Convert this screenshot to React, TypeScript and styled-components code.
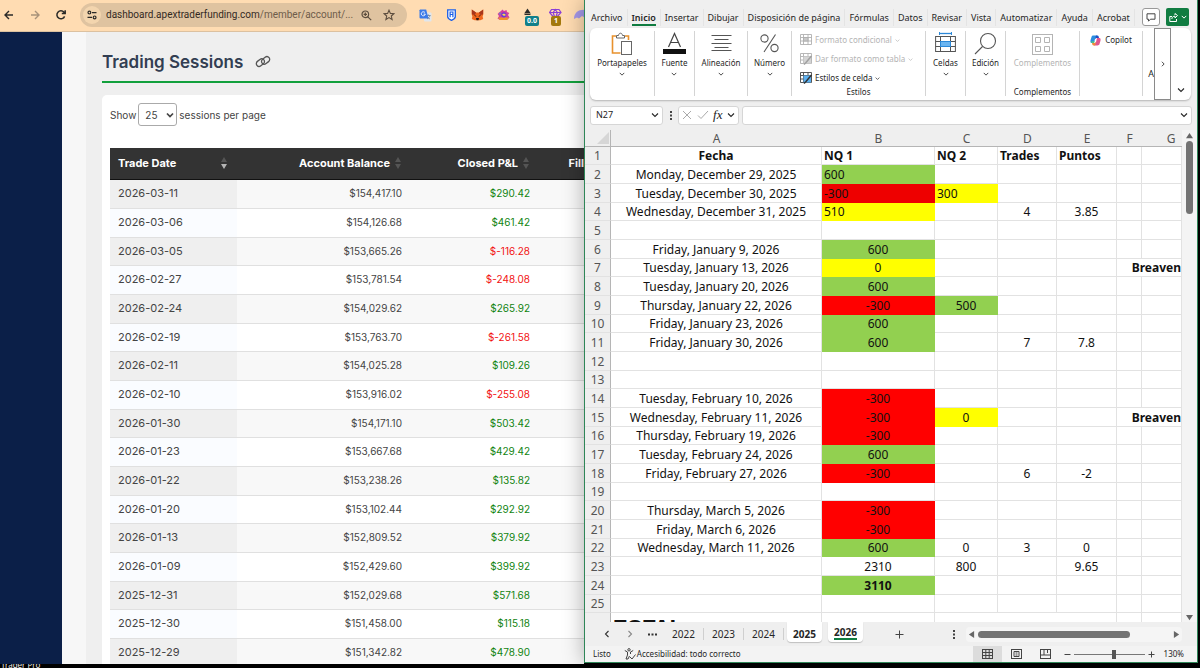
import React from "react";
import styled, { createGlobalStyle, css } from "styled-components";

const WEB_FONT = `"Inter", "Open Sans", sans-serif`;
const UI_FONT = `"Noto Sans", "Open Sans", sans-serif`;

const GlobalStyle = createGlobalStyle`
  *, *::before, *::after { box-sizing: border-box; }
  body { margin: 0; background: #000; overflow: hidden; }
  button, input, select { font: inherit; color: inherit; margin: 0; }
  button { padding: 0; border: 0; background: none; cursor: pointer; }
  a { color: inherit; text-decoration: none; }
  svg { display: block; flex: none; }
`;

const Desktop = styled.div`
  display: grid;
  grid-template-columns: 584fr 616fr;
  grid-template-rows: minmax(0, 1fr) 4px;
  height: 100vh;
  background: #000;
`;

const DesktopLabel = styled.div`
  grid-column: 1 / -1;
  padding-left: 1px;
  overflow: hidden;
  font: 8px/2px ${UI_FONT};
  color: #eee;
`;

/* ---------- Browser ---------- */

const Browser = styled.section`
  display: flex;
  flex-direction: column;
  min-width: 0;
  min-height: 0;
  overflow: hidden;
  background: #efefef;
`;

const BrowserBar = styled.header`
  display: flex;
  align-items: center;
  flex: none;
  height: 32px;
  padding-bottom: 1px;
  background: #ffdcb2;
  border-bottom: 1px solid #dcc1a0;
  overflow: hidden;
`;

const NavButton = styled.button<{ $dim?: boolean }>`
  display: grid;
  place-items: center;
  flex: none;
  width: 26px;
  height: 24px;
  color: ${(p) => (p.$dim ? "#a8927a" : "#2b2a28")};
`;

const NavGroup = styled.nav`
  display: flex;
  flex: none;
  width: 84px;
  margin-left: -4px;
`;

const AddressBar = styled.div`
  display: flex;
  align-items: center;
  flex: 0 0 56%;
  min-width: 0;
  height: 24px;
  padding: 0 10px 0 3px;
  border-radius: 12px;
  background: #dfc3a0;
  color: #5c4d3e;
`;

const SiteInfo = styled.button`
  display: grid;
  place-items: center;
  flex: none;
  width: 18px;
  height: 18px;
  border-radius: 9px;
  background: #f3d5ae;
  color: #2b2a28;
`;

const UrlLink = styled.a`
  flex: 1;
  min-width: 0;
  margin-left: 5px;
  white-space: nowrap;
  font: 10px/16px "Roboto", ${UI_FONT};
  color: #6e5c4a;
  b { font-weight: 400; color: #33291f; }
`;

const AddressAction = styled.button`
  display: grid;
  place-items: center;
  flex: none;
  width: 16px;
  height: 16px;
  margin-left: 7px;
`;

const Extensions = styled.div`
  display: flex;
  gap: 8px;
  flex: none;
  padding-left: 9px;
`;

const Extension = styled.button`
  position: relative;
  display: grid;
  place-items: center;
  flex: none;
  width: 18px;
  height: 24px;
`;

const ExtensionBadge = styled.span<{ $color: string }>`
  position: absolute;
  top: 13px;
  left: 5px;
  min-width: 10px;
  padding: 0 2px;
  border-radius: 2px;
  background: ${(p) => p.$color};
  color: #fff;
  font: 700 7px/10px ${UI_FONT};
`;

const Page = styled.div`
  display: flex;
  flex: 1;
  min-height: 0;
`;

const SideNav = styled.aside`
  flex: none;
  width: 62px;
  background: #0b1f48;
`;

const Gutter = styled.div`
  flex: none;
  width: 24px;
  background: #f7f7f7;
`;

const Main = styled.main`
  flex: 1;
  min-width: 0;
  padding-left: 16px;
  overflow: hidden;
  font: 10px/16px ${WEB_FONT};
  color: #444;
`;

const TitleBar = styled.div`
  display: flex;
  align-items: center;
  gap: 12px;
  height: 51px;
  padding-top: 10px;
  border-bottom: 2px solid #12a03c;
  color: #555;
`;

const Title = styled.h1`
  margin: 0;
  font: 600 17px/24px ${WEB_FONT};
  color: #323e52;
`;

const Card = styled.section`
  margin-top: 12px;
  padding: 8px 0 0 8px;
  border-radius: 5px 0 0 0;
  background: #fff;
`;

const PageSize = styled.label`
  display: flex;
  align-items: center;
  gap: 2px;
  height: 23px;
  margin-bottom: 22px;
`;

const SelectBox = styled.span`
  display: grid;
  align-items: center;
  width: 39px;
  height: 23px;
  & > * { grid-area: 1 / 1; }
  svg { justify-self: end; margin-right: 3px; pointer-events: none; }
`;

const SizeSelect = styled.select`
  appearance: none;
  width: 100%;
  height: 23px;
  padding: 0 6px;
  border: 1px solid #aaa;
  border-radius: 3px;
  background: #fff;
`;

const Sessions = styled.table`
  width: 100%;
  table-layout: fixed;
  border-collapse: separate;
  border-spacing: 0;
`;

const SessionHead = styled.th<{ $last?: boolean }>`
  height: 32px;
  padding: ${(p) => (p.$last ? "0 0 2px" : "0 10px 2px 8px")};
  background: #333;
  border-bottom: 1px solid #111;
  color: #fff;
  font-size: 11px;
  font-weight: 700;
  text-align: right;
  white-space: nowrap;
`;

const HeadInner = styled.span<{ $spread?: boolean }>`
  display: flex;
  align-items: center;
  justify-content: ${(p) => (p.$spread ? "space-between" : "flex-end")};
  gap: 5px;
`;

const SessionRow = styled.tr`
  td { height: 29px; background: #fff; border-bottom: 1px solid #e0e0e0; }
  td:first-child { background: #fafcff; font-size: 11px; }
  &:nth-child(odd) td { background: #f8f8f8; }
  &:nth-child(odd) td:first-child { background: #efefef; }
  &:nth-child(3n) td { height: 28px; }
`;

const SessionCell = styled.td<{ $tone?: "gain" | "loss"; $right?: boolean }>`
  padding: 0 9px 2px 8px;
  text-align: ${(p) => (p.$right ? "right" : "left")};
  color: ${(p) => (p.$tone === "gain" ? "#118411" : p.$tone === "loss" ? "#f21212" : "#444")};
`;

/* ---------- Spreadsheet window ---------- */

const Excel = styled.section`
  position: relative;
  z-index: 1;
  display: flex;
  flex-direction: column;
  min-width: 0;
  min-height: 0;
  margin: 0 2px 1px 0;
  border: 1px solid #2f8658;
  border-top: 0;
  background: #efefef;
  box-shadow: 0 0 20px rgba(0, 0, 0, 0.3);
  font: 9px/12px ${UI_FONT};
  color: #262626;
`;

const MenuBar = styled.nav`
  display: flex;
  align-items: center;
  flex: none;
  height: 28px;
  padding: 6px 8px 0 2px;
`;

const MenuTab = styled.button`
  flex: none;
  padding: 0 4px;
  border-right: 1px solid #e4e4e4;
  white-space: nowrap;
`;

const MenuLabel = styled.span<{ $active?: boolean }>`
  display: block;
  padding-top: 3px;
  border-bottom: 2px solid ${(p) => (p.$active ? "#107c41" : "transparent")};
  font-weight: ${(p) => (p.$active ? 600 : 400)};
`;

const CommentButton = styled.button`
  display: grid;
  place-items: center;
  flex: none;
  width: 18px;
  height: 18px;
  margin-left: auto;
  border: 1px solid #999;
  border-radius: 3px;
  background: #fff;
`;

const ShareButton = styled.button`
  display: flex;
  align-items: center;
  justify-content: center;
  gap: 3px;
  flex: none;
  width: 23px;
  height: 18px;
  margin-left: 6px;
  border-radius: 2px;
  background: #107c41;
  color: #fff;
`;

const Ribbon = styled.div`
  display: flex;
  flex: none;
  height: 72px;
  margin: 0 6px 0 5px;
  border-radius: 6px;
  background: #fff;
  box-shadow: 0 1px 2px rgba(0, 0, 0, 0.25);
`;

const RibbonGroup = styled.div<{ $w: number }>`
  display: flex;
  flex-direction: column;
  align-items: center;
  flex: 0 1 ${(p) => p.$w}px;
  min-width: 0;
  margin: 3px 0 4px;
  border-right: 1px solid #d4d4d4;
  font-size: 8px;
`;

const RibbonButton = styled.button<{ $dim?: boolean }>`
  display: flex;
  flex-direction: column;
  align-items: center;
  gap: 2px;
  padding-top: 1px;
  color: ${(p) => (p.$dim ? "#b4b4b4" : "inherit")};
  & > span { white-space: nowrap; }
`;

const GroupCaption = styled.span`
  margin-top: auto;
  line-height: 8px;
`;

const StyleCommands = styled.div`
  display: flex;
  flex-direction: column;
  gap: 1px;
  align-self: flex-start;
  margin-left: 8px;
`;

const StyleCommand = styled.button<{ $dim?: boolean }>`
  display: flex;
  align-items: center;
  gap: 3px;
  height: 18px;
  color: ${(p) => (p.$dim ? "#b4b4b4" : "inherit")};
  white-space: nowrap;
`;

const CopilotButton = styled.button`
  display: flex;
  align-items: center;
  gap: 4px;
  height: 18px;
`;

const RibbonClip = styled.div`
  flex: 1;
  min-width: 0;
  padding-top: 40px;
  overflow: hidden;
  text-align: right;
`;

const RibbonScroll = styled.button`
  display: grid;
  place-items: center;
  flex: none;
  width: 17px;
  height: 72px;
  border: 1px solid #8a8a8a;
`;

const RibbonCollapse = styled.button`
  display: grid;
  align-content: end;
  justify-content: center;
  flex: none;
  width: 20px;
  padding-bottom: 6px;
`;

const FormulaBar = styled.div`
  display: flex;
  align-items: center;
  flex: none;
  height: 30px;
  padding: 0 5px;
`;

const FieldBox = styled.div<{ $w?: number }>`
  display: flex;
  align-items: center;
  flex: ${(p) => (p.$w ? `0 0 ${p.$w}px` : "1 1 0")};
  min-width: 0;
  height: 19px;
  padding: 0 3px;
  border: 1px solid #d6d6d6;
  border-radius: 3px;
  background: #fff;
`;

const FieldInput = styled.input`
  flex: 1;
  width: 0;
  min-width: 0;
  border: 0;
  outline: 0;
  padding: 0 2px;
  background: transparent;
`;

const FieldDots = styled.span`
  flex: none;
  display: grid;
  place-items: center;
  width: 15px;
`;

const FieldActions = styled.div`
  display: flex;
  flex: 1;
  align-items: center;
  justify-content: space-between;
`;

const FxMark = styled.i`
  font: italic 400 13px/14px "Liberation Serif", serif;
  color: #222;
`;

const FormulaGap = styled.div`
  flex: none;
  width: 3px;
`;

const SheetArea = styled.div`
  display: flex;
  flex: 1;
  min-height: 0;
`;

const SheetClip = styled.div`
  flex: 1;
  min-width: 0;
  overflow: hidden;
`;

const Grid = styled.table`
  width: 100%;
  table-layout: fixed;
  border-collapse: separate;
  border-spacing: 0;
  font: 12px/16px ${UI_FONT};
  color: #111;
`;

const ColHead = styled.th<{ $shift?: boolean }>`
  height: 17px;
  padding: 0 0 0 ${(p) => (p.$shift ? "18px" : "0")};
  border-bottom: 1px solid #b5b5b5;
  background: #efefef;
  color: #555;
  font-weight: 400;
  line-height: 15px;
`;

const Corner = styled(ColHead)`
  border-right: 1px solid #b5b5b5;
  svg { margin-left: auto; margin-right: 1px; }
`;

const GridRow = styled.tr`
  & > * { height: 19px; }
  &:nth-child(3n + 1) > * { height: 18px; }
`;

const RowHead = styled.th`
  padding: 1px 0 0;
  border-right: 1px solid #b5b5b5;
  border-bottom: 1px solid #e2e2e2;
  background: #efefef;
  color: #555;
  font-weight: 400;
`;

const FILLS = { green: "#92d050", red: "#ff0000", crimson: "#ee0000", yellow: "#ffff00" };
type Fill = keyof typeof FILLS;

const Cell = styled.td<{ $fill?: Fill; $bold?: boolean; $align?: string }>`
  padding: 1px ${(p) => (p.$align === "right" ? "0" : "2px")} 0;
  border-right: 1px solid ${(p) => (p.$fill ? FILLS[p.$fill] : "#e2e2e2")};
  border-bottom: 1px solid ${(p) => (p.$fill ? FILLS[p.$fill] : "#e2e2e2")};
  background: ${(p) => (p.$fill ? FILLS[p.$fill] : "#fff")};
  text-align: ${(p) => p.$align ?? "center"};
  font-weight: ${(p) => (p.$bold ? 700 : 400)};
  white-space: nowrap;
`;

const TotalText = styled.div`
  height: 24px;
  padding-left: 1px;
  text-align: left;
  font: 700 22px/24px ${UI_FONT};
`;

const VScroll = styled.div`
  display: flex;
  flex-direction: column;
  align-items: center;
  flex: none;
  width: 15px;
  padding: 2px 0 1px;
  background: #f4f4f4;
`;

const VThumb = styled.div`
  width: 7px;
  height: 73px;
  margin: 2px 0 auto;
  border-radius: 4px;
  background: #737373;
`;

const SheetTabs = styled.div`
  display: flex;
  align-items: center;
  flex: none;
  height: 24px;
  padding-left: 10px;
  font-size: 10px;
`;

const TabNav = styled.button<{ $dim?: boolean }>`
  display: grid;
  place-items: center;
  width: 23px;
  color: ${(p) => (p.$dim ? "#888" : "#333")};
`;

const SheetTab = styled.button<{ $raised?: boolean }>`
  width: ${(p) => (p.$raised ? "35px" : "40px")};
  height: ${(p) => (p.$raised ? "20px" : "12px")};
  border-right: ${(p) => (p.$raised ? "0" : "1px solid #cfcfcf")};
  ${(p) =>
    p.$raised &&
    css`
      align-self: flex-start;
      margin: 0 3px;
      border-radius: 0 0 4px 4px;
      background: #fff;
      font-weight: 700;
      box-shadow: 0 1px 1px rgba(0, 0, 0, 0.2);
    `}
`;

const TabName = styled.span<{ $active?: boolean }>`
  display: block;
  width: 23px;
  margin: 0 auto;
  padding-top: ${(p) => (p.$active ? "1px" : "4px")};
  border-bottom: ${(p) => (p.$active ? "2px solid #107c41" : "0")};
`;

const AddSheet = styled.button`
  display: grid;
  place-items: center;
  width: 24px;
  margin-left: 21px;
`;

const HScroll = styled.div`
  display: flex;
  align-items: center;
  justify-content: space-between;
  flex: 0 0 216px;
  height: 15px;
  margin-right: 15px;
  padding: 0 2px;
  border-radius: 4px;
  background: #f5f5f5;
`;

const HThumb = styled.div`
  width: 152px;
  height: 7px;
  margin: 0 auto 0 3px;
  border-radius: 4px;
  background: #737373;
`;

const TabsSplitter = styled.div`
  margin: 0 11px 0 auto;
`;

const StatusBar = styled.footer`
  display: flex;
  align-items: center;
  flex: none;
  height: 16px;
  padding: 0 13px 0 8px;
  background: #f3f3f3;
  font-size: 8px;
`;

const StatusItem = styled.span`
  display: flex;
  align-items: center;
  gap: 1px;
  margin-right: 13px;
`;

const ViewButtons = styled.div`
  display: flex;
  margin: 0 4px 0 auto;
`;

const ViewButton = styled.button<{ $active?: boolean }>`
  display: grid;
  place-items: center;
  width: 29px;
  height: 16px;
  background: ${(p) => (p.$active ? "#dcdcdc" : "transparent")};
`;

const ZoomSlider = styled.input`
  appearance: none;
  width: 71px;
  height: 10px;
  margin: 0 3px;
  background: linear-gradient(#777, #777) center / 100% 1px no-repeat;
  &::-webkit-slider-thumb {
    appearance: none;
    width: 4px;
    height: 9px;
    background: #555;
  }
`;

const ZoomValue = styled.span`
  width: 29px;
  text-align: right;
`;

/* ---------- Small drawings ---------- */

const Chevron = ({ w = 6, rotate = 0, sw = 1 }: { w?: number; rotate?: number; sw?: number }) => (
  <svg width={w} height={w} viewBox="0 0 8 8" fill="none" stroke="currentColor" strokeWidth={sw * 1.1}>
    <path d="M1 2.5 4 5.5 7 2.5" transform={`rotate(${rotate} 4 4)`} />
  </svg>
);

const Triangle = ({ dir }: { dir: "up" | "down" | "left" | "right" }) => {
  const d = { up: "M0 7 4 1 8 7Z", down: "M0 1 4 7 8 1Z", left: "M7 0 1 4 7 8Z", right: "M1 0 7 4 1 8Z" }[dir];
  return (
    <svg width="7" height="7" viewBox="0 0 8 8" fill="#666">
      <path d={d} />
    </svg>
  );
};

const SortMark = ({ down }: { down?: boolean }) => (
  <svg width="6" height="14" viewBox="0 0 6 14">
    <path d="M0 6 3 1 6 6Z" fill="#555" />
    <path d="M0 8 3 13 6 8Z" fill={down ? "#b4b4b4" : "#555"} />
  </svg>
);

const Arrow = ({ flip }: { flip?: boolean }) => (
  <svg width="12" height="12" viewBox="0 0 12 12" fill="none" stroke="currentColor" strokeWidth="1.4">
    <path d={flip ? "M2 6H10M6 2l4 4-4 4" : "M10 6H2M6 2 2 6l4 4"} />
  </svg>
);

const Reload = () => (
  <svg width="12" height="12" viewBox="0 0 12 12" fill="none" stroke="currentColor" strokeWidth="1.5">
    <path d="M9.6 7.4A4 4 0 1 1 9 3.3L10 4.3M10.2 1.2V4.6H6.8" />
  </svg>
);

const Tune = () => (
  <svg width="10" height="10" viewBox="0 0 10 10" fill="none" stroke="currentColor" strokeWidth="1.2">
    <circle cx="2.4" cy="2.6" r="1.4" />
    <path d="M5 2.6H9.5M.5 7.4H5" />
    <circle cx="7.6" cy="7.4" r="1.4" />
  </svg>
);

const Magnify = () => (
  <svg width="11" height="11" viewBox="0 0 11 11" fill="none" stroke="currentColor" strokeWidth="1.2">
    <circle cx="4.3" cy="4.3" r="3.3" />
    <path d="M6.8 6.8 10.2 10.2M4.3 2.6V6M2.6 4.3H6" />
  </svg>
);

const Star = () => (
  <svg width="12" height="12" viewBox="0 0 12 12" fill="none" stroke="currentColor" strokeWidth="1.1">
    <path d="M6 1.2 7.4 4.4 10.9 4.7 8.3 7 9.1 10.5 6 8.6 2.9 10.5 3.7 7 1.1 4.7 4.6 4.4Z" />
  </svg>
);

const LinkMark = () => (
  <svg width="16" height="13" viewBox="0 0 16 13" fill="none" stroke="currentColor" strokeWidth="1.3">
    <rect x="-4.4" y="-2.8" width="8.8" height="5.6" rx="2.8" transform="translate(5.4 7.6) rotate(-38)" />
    <rect x="-4.4" y="-2.8" width="8.8" height="5.6" rx="2.8" transform="translate(10.6 5.4) rotate(-38)" />
  </svg>
);

const TranslateIcon = () => (
  <svg width="13" height="13" viewBox="0 0 13 13">
    <rect x="5" y="3.5" width="7.5" height="9" rx="1" fill="#dfe6ee" />
    <path d="M7.5 6.5h4M9.5 5.5v1M11 6.5c-.4 1.6-1.6 2.8-3 3.4M8.3 7.8c.6 1 1.5 1.8 2.7 2.2" stroke="#6f8296" strokeWidth=".8" fill="none" />
    <path d="M1 .5H7.2L9.5 9.5H1.4A1 1 0 0 1 .5 8.6V1.2Z" fill="#3b7be8" />
    <path d="M6 3.7A2 2 0 1 0 6.3 5.1H4.6" stroke="#fff" strokeWidth=".9" fill="none" />
  </svg>
);

const ShieldIcon = () => (
  <svg width="9" height="12" viewBox="0 0 9 12">
    <path d="M.7.8H8.3V7.8C8.3 9.3 6.5 10.5 4.5 11.3 2.5 10.5.7 9.3.7 7.8Z" fill="#fff" stroke="#1c5fe6" strokeWidth="1.3" />
    <path d="M3.1 8.3V3H5.9V8.3M3.1 5.5H5.9" fill="none" stroke="#1c5fe6" strokeWidth="1.2" />
  </svg>
);

const FoxIcon = () => (
  <svg width="13" height="12" viewBox="0 0 13 12">
    <path d="M.8.6 5 3.5H8L12.2.6 12.4 5 11.6 7.5 12.2 10 9.3 11.2H3.7L.8 10 1.4 7.5.6 5Z" fill="#f0661c" />
    <path d="M.8.6 5 3.5 4 6 1 5.5ZM12.2.6 8 3.5 9 6 12 5.5Z" fill="#a8361a" />
    <path d="M5 9H8L7.5 11.2H5.5Z" fill="#2b1b14" />
    <path d="M3.5 6.5 5.3 7.3M9.5 6.5 7.7 7.3" stroke="#3a1c10" strokeWidth=".9" />
  </svg>
);

const GearBlobIcon = () => (
  <svg width="13" height="12" viewBox="0 0 13 12">
    <path d="M2 3.5 4 2 5.5.6 7 2 9.5 1 10 3 12.3 4 11 6 12.5 8.5 10 11H3L.5 9.5 2 7 .6 5Z" fill="#d23fa0" />
    <path d="M1 8.5H12L10 11H3Z" fill="#f0952a" />
    <path d="M2 4 4 3.5 3 6Z" fill="#3ba7d8" />
    <circle cx="6.8" cy="5.8" r="2.6" fill="#6c3fd1" />
    <path d="M5 5.5 7 4.5 9 6 7 7Z" fill="#ffd84a" />
  </svg>
);

const TrianglesIcon = () => (
  <svg width="13" height="14" viewBox="0 0 13 14">
    <path d="M4.5.5 7.8 5.5H1.2Z" fill="#2b2a28" />
    <path d="M1.5 6.5H7.5" stroke="#2b2a28" />
  </svg>
);

const GemIcon = () => (
  <svg width="13" height="14" viewBox="0 0 13 14" fill="none" stroke="#8a3fd6" strokeWidth="1.2">
    <path d="M2.5 1.5H10L12 4.5 6.2 11 .6 4.5ZM.6 4.5H12M4.2 4.5 6.2 11 8.4 4.5 6.2 1.5Z" />
  </svg>
);

const BlobIcon = () => (
  <svg width="14" height="12" viewBox="0 0 14 12">
    <path d="M0 10C0 4 4 .8 10 .8H14V8L11 9 8 7 5 9.5 3 8.5Z" fill="#a597e8" />
  </svg>
);

const ClipboardIcon = () => (
  <svg width="22" height="23" viewBox="0 0 22 23" fill="none">
    <path d="M5 4H1.5V21H9.5M14 4H17.5V8" stroke="#e8912d" strokeWidth="1.6" />
    <path d="M5.5 6V3.5H7.5C7.7 2 8.5 1.2 9.5 1.2S11.3 2 11.5 3.5H13.5V6Z" fill="#fff" stroke="#666" />
    <rect x="10.5" y="9.5" width="10" height="13" fill="#fff" stroke="#666" />
  </svg>
);

const FontIcon = () => (
  <svg width="23" height="23" viewBox="0 0 23 23" fill="none">
    <path d="M5.5 15 11.5 1.5 17.5 15M7.5 10.5H15.5" stroke="#444" strokeWidth="1.2" />
    <rect y="17" width="23" height="5" fill="#111" />
  </svg>
);

const AlignIcon = () => (
  <svg width="21" height="23" viewBox="0 0 21 23" stroke="#555">
    <path d="M.5 3.5H20.5M3.5 7.5H17.5M.5 11.5H20.5M3.5 15.5H17.5M.5 18.5H20.5" />
  </svg>
);

const PercentIcon = () => (
  <svg width="19" height="23" viewBox="0 0 19 23" fill="none" stroke="#555" strokeWidth="1.1">
    <circle cx="4.5" cy="6.5" r="3.6" />
    <circle cx="14.5" cy="16" r="3.6" />
    <path d="M15.5 2.5 4 20" />
  </svg>
);

const StyleGlyph = ({ kind }: { kind: "cond" | "table" | "cell" }) => (
  <svg width="12" height="12" viewBox="0 0 12 12" fill="none" stroke={kind === "cell" ? "#444" : "#b0b0b0"}>
    <path d="M.5.5H11.5V10.5H.5ZM.5 3.5H11.5M.5 7H11.5M3.5.5V10.5M8 .5V10.5" strokeWidth=".9" />
    {kind === "cond" && <rect x="3.5" y="3.5" width="4.5" height="3.5" fill="#c8c8c8" />}
    {kind !== "cond" && (
      <>
        <path d="M3.5 3.5H11V10.5H3.5Z" fill={kind === "cell" ? "#5cb0f0" : "#d4d4d4"} stroke="none" />
        <path d="M11.5 3 6 9.5 4 11.5" stroke={kind === "cell" ? "#333" : "#a0a0a0"} strokeWidth="1.5" />
      </>
    )}
  </svg>
);

const CellsIcon = () => (
  <svg width="21" height="23" viewBox="0 0 21 23" fill="none">
    <path d="M4.5 1.5H16.5" stroke="#2b88d8" strokeWidth="1.3" />
    <path d="M4.5 0V3M16.5 0V3" stroke="#2b88d8" />
    <rect x=".6" y="4.5" width="19.8" height="15" stroke="#555" />
    <path d="M.6 9.5H20.4M.6 14.5H20.4M5.5 4.5V19.5M15.5 4.5V19.5" stroke="#555" />
    <rect x="5.5" y="9.5" width="10" height="5" fill="#6bb5f0" stroke="#2b88d8" />
  </svg>
);

const SearchIcon = () => (
  <svg width="23" height="23" viewBox="0 0 23 23" fill="none" stroke="#555" strokeWidth="1.1">
    <circle cx="14" cy="9" r="7.5" />
    <path d="M8.5 14.5 1 22" />
  </svg>
);

const AddInsIcon = () => (
  <svg width="21" height="23" viewBox="0 0 21 23" fill="none" stroke="#b4b4b4">
    <rect x=".5" y="2.5" width="20" height="20" />
    <path d="M3.5 5.5h5v5h-5ZM12.5 5.5h5v5h-5ZM3.5 14.5h5v5h-5ZM12.5 14.5h5v5h-5Z" />
  </svg>
);

const CopilotIcon = () => (
  <svg width="11" height="11" viewBox="0 0 11 11">
    <path d="M3.5.6H7L5 4 4 8H1.5C.4 8 .2 6.5.6 5L1.5 2C1.8 1 2.5.6 3.5.6Z" fill="#2a8de0" />
    <path d="M6 .6H7.5C8.5.6 8.8 1.5 9 3H6.5L5 4Z" fill="#1b4fc4" />
    <path d="M7.5 10.4H4L6 7 7 3H9.5C10.6 3 10.8 4.5 10.4 6L9.5 9C9.2 10 8.5 10.4 7.5 10.4Z" fill="#e0568f" />
    <path d="M5 10.4H3.5C2.5 10.4 2.2 9.5 2 8H4.5L6 7Z" fill="#f08a3c" />
    <path d="M1 6.5 4.5 6 4 8H1.5Z" fill="#4cc38a" />
  </svg>
);

const SheetViewIcon = ({ kind }: { kind: "grid" | "page" | "break" }) => (
  <svg width="11" height="10" viewBox="0 0 11 10" fill="none" stroke="#444">
    <rect x=".5" y=".5" width="10" height="9" />
    {kind === "grid" && <path d="M.5 3.5H10.5M.5 6.5H10.5M3.8.5V9.5M7.2.5V9.5" />}
    {kind === "page" && <path d="M3 2.5H8V7.5H3ZM4.5 4H6.5M4.5 6H6.5" />}
    {kind === "break" && <path d="M4 .5V6H.5M7.5.5V4M4 6H10.5" />}
  </svg>
);

const Dots = () => (
  <svg width="2" height="9" viewBox="0 0 2 9" fill="#444">
    <path d="M0 0h2v2H0zM0 3.500h2v2H0zM0 7h2v2H0z" />
  </svg>
);

/* ---------- Data ---------- */

const sessions: [string, string, string][] = [
  ["2026-03-11", "$154,417.10", "$290.42"],
  ["2026-03-06", "$154,126.68", "$461.42"],
  ["2026-03-05", "$153,665.26", "$-116.28"],
  ["2026-02-27", "$153,781.54", "$-248.08"],
  ["2026-02-24", "$154,029.62", "$265.92"],
  ["2026-02-19", "$153,763.70", "$-261.58"],
  ["2026-02-11", "$154,025.28", "$109.26"],
  ["2026-02-10", "$153,916.02", "$-255.08"],
  ["2026-01-30", "$154,171.10", "$503.42"],
  ["2026-01-23", "$153,667.68", "$429.42"],
  ["2026-01-22", "$153,238.26", "$135.82"],
  ["2026-01-20", "$153,102.44", "$292.92"],
  ["2026-01-13", "$152,809.52", "$379.92"],
  ["2026-01-09", "$152,429.60", "$399.92"],
  ["2025-12-31", "$152,029.68", "$571.68"],
  ["2025-12-30", "$151,458.00", "$115.18"],
  ["2025-12-29", "$151,342.82", "$478.90"],
];

type Entry = { t: string; fill?: Fill; bold?: boolean; align?: string };
type Row = { a?: Entry; b?: Entry; c?: Entry; d?: Entry; e?: Entry; note?: string };
const head = (t: string): Entry => ({ t, bold: true, align: "left" });
const v = (t: string, fill?: Fill, align?: string): Entry => ({ t, fill, align });

const rows: Row[] = [
  { a: { t: "Fecha", bold: true }, b: head("NQ 1"), c: head("NQ 2"), d: head("Trades"), e: head("Puntos") },
  { a: v("Monday, December 29, 2025"), b: v("600", "green", "left") },
  { a: v("Tuesday, December 30, 2025"), b: v("-300", "crimson", "left"), c: v("300", "yellow", "left") },
  { a: v("Wednesday, December 31, 2025"), b: v("510", "yellow", "left"), d: v("4"), e: v("3.85") },
  {},
  { a: v("Friday, January 9, 2026"), b: v("600", "green") },
  { a: v("Tuesday, January 13, 2026"), b: v("0", "yellow"), note: "Breaven" },
  { a: v("Tuesday, January 20, 2026"), b: v("600", "green") },
  { a: v("Thursday, January 22, 2026"), b: v("-300", "red"), c: v("500", "green") },
  { a: v("Friday, January 23, 2026"), b: v("600", "green") },
  { a: v("Friday, January 30, 2026"), b: v("600", "green"), d: v("7"), e: v("7.8") },
  {},
  {},
  { a: v("Tuesday, February 10, 2026"), b: v("-300", "red") },
  { a: v("Wednesday, February 11, 2026"), b: v("-300", "red"), c: v("0", "yellow"), note: "Breaven" },
  { a: v("Thursday, February 19, 2026"), b: v("-300", "red") },
  { a: v("Tuesday, February 24, 2026"), b: v("600", "green") },
  { a: v("Friday, February 27, 2026"), b: v("-300", "red"), d: v("6"), e: v("-2") },
  {},
  { a: v("Thursday, March 5, 2026"), b: v("-300", "red") },
  { a: v("Friday, March 6, 2026"), b: v("-300", "red") },
  { a: v("Wednesday, March 11, 2026"), b: v("600", "green"), c: v("0"), d: v("3"), e: v("0") },
  { b: v("2310"), c: v("800"), e: v("9.65") },
  { b: { t: "3110", fill: "green", bold: true } },
  {},
];

const menu = ["Archivo", "Inicio", "Insertar", "Dibujar", "Disposición de página", "Fórmulas", "Datos", "Revisar", "Vista", "Automatizar", "Ayuda", "Acrobat"];

const EntryCell = ({ entry }: { entry?: Entry }) => (
  <Cell $fill={entry?.fill} $bold={entry?.bold} $align={entry?.align}>
    {entry?.t}
  </Cell>
);

const BigCommand = ({ w, icon, label }: { w: number; icon: React.ReactNode; label: string }) => (
  <RibbonGroup $w={w}>
    <RibbonButton>
      {icon}
      <span>{label}</span>
      <Chevron w={6} />
    </RibbonButton>
  </RibbonGroup>
);

function BrowserWindow() {
  return (
    <Browser>
      <BrowserBar>
        <NavGroup>
          <NavButton aria-label="Back"><Arrow /></NavButton>
          <NavButton aria-label="Forward" $dim><Arrow flip /></NavButton>
          <NavButton aria-label="Reload"><Reload /></NavButton>
        </NavGroup>
        <AddressBar>
          <SiteInfo aria-label="Site information"><Tune /></SiteInfo>
          <UrlLink href="#account"><b>dashboard.apextraderfunding.com</b>/member/account/...</UrlLink>
          <AddressAction aria-label="Zoom"><Magnify /></AddressAction>
          <AddressAction aria-label="Bookmark"><Star /></AddressAction>
        </AddressBar>
        <Extensions>
          <Extension aria-label="Translate"><TranslateIcon /></Extension>
          <Extension aria-label="Password manager"><ShieldIcon /></Extension>
          <Extension aria-label="Wallet"><FoxIcon /></Extension>
          <Extension aria-label="Games"><GearBlobIcon /></Extension>
          <Extension aria-label="Tracker"><TrianglesIcon /><ExtensionBadge $color="#12808a">0.0</ExtensionBadge></Extension>
          <Extension aria-label="Gem"><GemIcon /><ExtensionBadge $color="#a3780c">1</ExtensionBadge></Extension>
          <Extension aria-label="Ghost"><BlobIcon /></Extension>
        </Extensions>
      </BrowserBar>
      <Page>
        <SideNav />
        <Gutter />
        <Main>
          <TitleBar>
            <Title>Trading Sessions</Title>
            <LinkMark />
          </TitleBar>
          <Card>
            <PageSize>
              Show
              <SelectBox>
                <SizeSelect defaultValue="25">
                  <option>25</option>
                  <option>50</option>
                </SizeSelect>
                <Chevron w={8} sw={1.6} />
              </SelectBox>
              sessions per page
            </PageSize>
            <Sessions>
              <colgroup>
                <col width="127" />
                <col width="174" />
                <col width="128" />
                <col />
              </colgroup>
              <thead>
                <tr>
                  <SessionHead><HeadInner $spread>Trade Date<SortMark down /></HeadInner></SessionHead>
                  <SessionHead><HeadInner>Account Balance<SortMark /></HeadInner></SessionHead>
                  <SessionHead><HeadInner>Closed P&amp;L<SortMark /></HeadInner></SessionHead>
                  <SessionHead $last>Fill</SessionHead>
                </tr>
              </thead>
              <tbody>
                {sessions.map(([date, balance, pnl]) => (
                  <SessionRow key={date}>
                    <SessionCell>{date}</SessionCell>
                    <SessionCell $right>{balance}</SessionCell>
                    <SessionCell $right $tone={pnl.includes("-") ? "loss" : "gain"}>{pnl}</SessionCell>
                    <SessionCell />
                  </SessionRow>
                ))}
              </tbody>
            </Sessions>
          </Card>
        </Main>
      </Page>
    </Browser>
  );
}

function ExcelWindow() {
  return (
    <Excel>
      <MenuBar>
        {menu.map((m) => (
          <MenuTab key={m}><MenuLabel $active={m === "Inicio"}>{m}</MenuLabel></MenuTab>
        ))}
        <CommentButton aria-label="Comentarios">
          <svg width="10" height="9" viewBox="0 0 10 9" fill="none" stroke="#444">
            <path d="M1 .8H9V6.2H4.5L2.5 8.2V6.2H1Z" />
          </svg>
        </CommentButton>
        <ShareButton aria-label="Compartir">
          <svg width="9" height="9" viewBox="0 0 9 9" fill="none" stroke="#fff">
            <path d="M3 3.5H.8V8.5H7.5V6M2.8 6C3 4 4.2 3.2 6 3.2V5L8.5 2.5 6 .5V2" />
          </svg>
          <Chevron w={6} sw={1.2} />
        </ShareButton>
      </MenuBar>
      <Ribbon>
        <BigCommand w={65} icon={<ClipboardIcon />} label="Portapapeles" />
        <BigCommand w={40} icon={<FontIcon />} label="Fuente" />
        <BigCommand w={53} icon={<AlignIcon />} label="Alineación" />
        <BigCommand w={44} icon={<PercentIcon />} label="Número" />
        <RibbonGroup $w={134}>
          <StyleCommands>
            <StyleCommand $dim><StyleGlyph kind="cond" />Formato condicional <Chevron w={5} /></StyleCommand>
            <StyleCommand $dim><StyleGlyph kind="table" />Dar formato como tabla <Chevron w={5} /></StyleCommand>
            <StyleCommand><StyleGlyph kind="cell" />Estilos de celda <Chevron w={5} /></StyleCommand>
          </StyleCommands>
          <GroupCaption>Estilos</GroupCaption>
        </RibbonGroup>
        <BigCommand w={40} icon={<CellsIcon />} label="Celdas" />
        <BigCommand w={40} icon={<SearchIcon />} label="Edición" />
        <RibbonGroup $w={74}>
          <RibbonButton $dim><AddInsIcon /><span>Complementos</span></RibbonButton>
          <GroupCaption>Complementos</GroupCaption>
        </RibbonGroup>
        <RibbonGroup $w={63}>
          <CopilotButton><CopilotIcon />Copilot</CopilotButton>
        </RibbonGroup>
        <RibbonClip>A</RibbonClip>
        <RibbonScroll aria-label="Más comandos"><Chevron w={6} rotate={-90} /></RibbonScroll>
        <RibbonCollapse aria-label="Contraer la cinta"><Chevron w={8} /></RibbonCollapse>
      </Ribbon>
      <FormulaBar>
        <FieldBox $w={73}>
          <FieldInput aria-label="Cuadro de nombres" defaultValue="N27" />
          <Chevron w={8} />
        </FieldBox>
        <FieldDots><Dots /></FieldDots>
        <FieldBox $w={61}>
          <FieldActions>
            <svg width="10" height="10" viewBox="0 0 10 10" stroke="#aaa"><path d="M1 1 9 9M9 1 1 9" /></svg>
            <svg width="12" height="10" viewBox="0 0 12 10" fill="none" stroke="#aaa"><path d="M1 5.5 4 8.5 11 1" /></svg>
            <FxMark>fx</FxMark>
            <Chevron w={8} />
          </FieldActions>
        </FieldBox>
        <FormulaGap />
        <FieldBox>
          <FieldInput aria-label="Barra de fórmulas" />
          <Chevron w={8} />
        </FieldBox>
      </FormulaBar>
      <SheetArea>
        <SheetClip>
          <Grid>
            <colgroup>
              <col width="26" />
              <col width="211" />
              <col width="113" />
              <col width="63" />
              <col width="59" />
              <col width="60" />
              <col width="25" />
              <col />
            </colgroup>
            <thead>
              <tr>
                <Corner aria-label="Seleccionar todo">
                  <svg width="12" height="12" viewBox="0 0 12 12"><path d="M12 0V12H0Z" fill="#d6d6d6" /></svg>
                </Corner>
                {["A", "B", "C", "D", "E", "F", "G"].map((c) => (
                  <ColHead key={c} $shift={c === "G"}>{c}</ColHead>
                ))}
              </tr>
            </thead>
            <tbody>
              {rows.map((r, i) => (
                <GridRow key={i}>
                  <RowHead>{i + 1}</RowHead>
                  <EntryCell entry={r.a} />
                  <EntryCell entry={r.b} />
                  <EntryCell entry={r.c} />
                  <EntryCell entry={r.d} />
                  <EntryCell entry={r.e} />
                  {r.note ? (
                    <Cell colSpan={2} $bold $align="right">{r.note}</Cell>
                  ) : (
                    <>
                      <Cell />
                      <Cell />
                    </>
                  )}
                </GridRow>
              ))}
              <tr>
                <RowHead />
                <Cell><TotalText>TOTAL</TotalText></Cell>
                <Cell />
                <Cell colSpan={3} />
                <Cell />
                <Cell />
              </tr>
            </tbody>
          </Grid>
        </SheetClip>
        <VScroll>
          <Triangle dir="up" />
          <VThumb />
          <Triangle dir="down" />
        </VScroll>
      </SheetArea>
      <SheetTabs>
        <TabNav aria-label="Hoja anterior"><Chevron w={8} rotate={90} /></TabNav>
        <TabNav aria-label="Hoja siguiente" $dim><Chevron w={8} rotate={-90} /></TabNav>
        <TabNav aria-label="Más hojas">
          <svg width="9" height="3" viewBox="0 0 9 3" fill="#333"><path d="M0 .5h2v2H0zM3.5.5h2v2h-2zM7 .5h2v2H7z" /></svg>
        </TabNav>
        <SheetTab>2022</SheetTab>
        <SheetTab>2023</SheetTab>
        <SheetTab>2024</SheetTab>
        <SheetTab $raised><TabName>2025</TabName></SheetTab>
        <SheetTab $raised><TabName $active>2026</TabName></SheetTab>
        <AddSheet aria-label="Hoja nueva">
          <svg width="9" height="9" viewBox="0 0 9 9" stroke="#444"><path d="M4.5.5V8.5M.5 4.5H8.5" /></svg>
        </AddSheet>
        <TabsSplitter><Dots /></TabsSplitter>
        <HScroll>
          <Triangle dir="left" />
          <HThumb />
          <Triangle dir="right" />
        </HScroll>
      </SheetTabs>
      <StatusBar>
        <StatusItem>Listo</StatusItem>
        <StatusItem>
          <svg width="12" height="12" viewBox="0 0 12 12" fill="none" stroke="#444">
            <circle cx="5" cy="1.8" r="1.2" />
            <path d="M.8 2.5 3.5 4V7L2 11H4L5.5 8M9.2 2.5 6.5 4V6M6 9 8 11 11.5 6.5" />
          </svg>
          Accesibilidad: todo correcto
        </StatusItem>
        <ViewButtons>
          <ViewButton aria-label="Normal" $active><SheetViewIcon kind="grid" /></ViewButton>
          <ViewButton aria-label="Diseño de página"><SheetViewIcon kind="page" /></ViewButton>
          <ViewButton aria-label="Saltos de página"><SheetViewIcon kind="break" /></ViewButton>
        </ViewButtons>
        <button aria-label="Alejar">
          <svg width="7" height="7" viewBox="0 0 7 7" stroke="#444"><path d="M.5 3.5H6.5" /></svg>
        </button>
        <ZoomSlider type="range" min={0} max={100} defaultValue={56} aria-label="Zoom" />
        <button aria-label="Acercar">
          <svg width="7" height="7" viewBox="0 0 7 7" stroke="#444"><path d="M.5 3.5H6.5M3.5.5V6.5" /></svg>
        </button>
        <ZoomValue>130%</ZoomValue>
      </StatusBar>
    </Excel>
  );
}

export default function App() {
  return (
    <Desktop>
      <GlobalStyle />
      <BrowserWindow />
      <ExcelWindow />
      <DesktopLabel>Trader Pro</DesktopLabel>
    </Desktop>
  );
}
